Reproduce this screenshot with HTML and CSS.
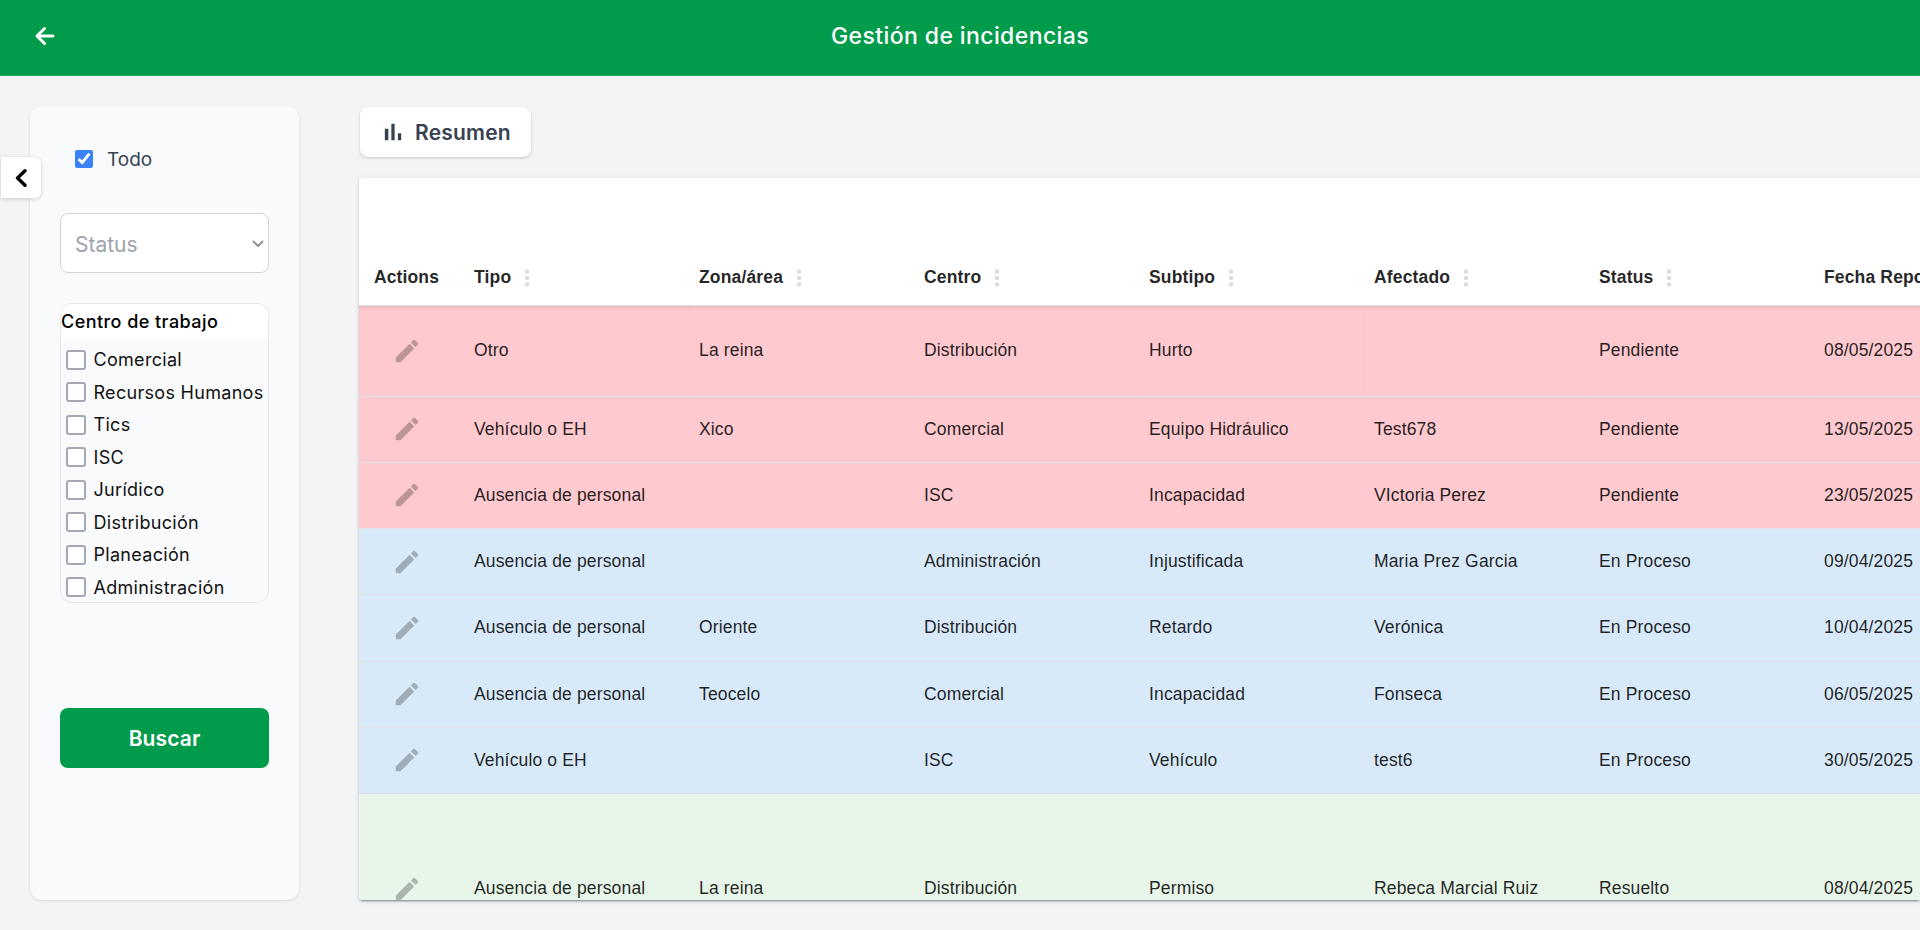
FILE: index.html
```html
<!DOCTYPE html>
<html lang="es">
<head>
    <meta charset="UTF-8">
    <meta name="viewport" content="width=device-width, initial-scale=1.0">
    <title>Gestión de incidencias</title>
    <link rel="stylesheet" href="styles.css">
</head>
<body>
    <header class="topbar">
        <button class="back-btn" aria-label="Volver">
            <svg width="20" height="20" viewBox="0 0 20 20" fill="none" stroke="#fff" stroke-width="2.9" stroke-linecap="round" stroke-linejoin="round"><path d="M18 10H2.5M9.5 2.5 2 10l7.5 7.5"/></svg>
        </button>
        <h1>Gestión de incidencias</h1>
    </header>

    <main class="layout">
        <button class="collapse-btn" aria-label="Ocultar filtros">
            <svg width="12" height="18" viewBox="0 0 12 18" fill="none" stroke="#000" stroke-width="3.4" stroke-linecap="round" stroke-linejoin="round"><path d="M10 1.8 2.5 9l7.5 7.2"/></svg>
        </button>

        <aside class="sidebar">
            <label class="check-all"><input type="checkbox" checked> Todo</label>

            <div class="select-wrap">
                <select class="status-select">
                    <option>Status</option>
                </select>
                <svg class="select-arrow" width="12" height="8" viewBox="0 0 12 8" fill="none" stroke="#8b8f98" stroke-width="1.8" stroke-linecap="round" stroke-linejoin="round"><path d="M1.5 1.5 6 6l4.5-4.5"/></svg>
            </div>

            <div class="work-list">
                <div class="work-title">Centro de trabajo</div>
                <label class="work-item"><input type="checkbox"> Comercial</label>
                <label class="work-item"><input type="checkbox"> Recursos Humanos</label>
                <label class="work-item"><input type="checkbox"> Tics</label>
                <label class="work-item"><input type="checkbox"> ISC</label>
                <label class="work-item"><input type="checkbox"> Jurídico</label>
                <label class="work-item"><input type="checkbox"> Distribución</label>
                <label class="work-item"><input type="checkbox"> Planeación</label>
                <label class="work-item"><input type="checkbox"> Administración</label>
            </div>

            <button class="search-btn">Buscar</button>
        </aside>

        <section class="content">
            <button class="summary-btn">
                <svg width="28" height="28" viewBox="0 0 24 24" fill="#374151"><path d="M5 9.2h3V19H5zM10.6 5h2.8v14h-2.8zm5.6 8H19v6h-2.8z"/></svg>
                Resumen
            </button>

            <div class="table-card">
                <table class="grid">
                    <colgroup>
                        <col class="col-actions">
                        <col class="col-data"><col class="col-data"><col class="col-data"><col class="col-data">
                        <col class="col-data"><col class="col-data"><col class="col-data">
                    </colgroup>
                    <thead>
                        <tr>
                            <th class="actions-cell"><span class="th-inner th-center">Actions</span></th>
                            <th><span class="th-inner">Tipo <svg class="dots" width="6" height="18" viewBox="0 0 6 18"><circle cx="3" cy="2.5" r="2.3"/><circle cx="3" cy="9" r="2.3"/><circle cx="3" cy="15.5" r="2.3"/></svg></span></th>
                            <th><span class="th-inner">Zona/área <svg class="dots" width="6" height="18" viewBox="0 0 6 18"><circle cx="3" cy="2.5" r="2.3"/><circle cx="3" cy="9" r="2.3"/><circle cx="3" cy="15.5" r="2.3"/></svg></span></th>
                            <th><span class="th-inner">Centro <svg class="dots" width="6" height="18" viewBox="0 0 6 18"><circle cx="3" cy="2.5" r="2.3"/><circle cx="3" cy="9" r="2.3"/><circle cx="3" cy="15.5" r="2.3"/></svg></span></th>
                            <th><span class="th-inner">Subtipo <svg class="dots" width="6" height="18" viewBox="0 0 6 18"><circle cx="3" cy="2.5" r="2.3"/><circle cx="3" cy="9" r="2.3"/><circle cx="3" cy="15.5" r="2.3"/></svg></span></th>
                            <th><span class="th-inner">Afectado <svg class="dots" width="6" height="18" viewBox="0 0 6 18"><circle cx="3" cy="2.5" r="2.3"/><circle cx="3" cy="9" r="2.3"/><circle cx="3" cy="15.5" r="2.3"/></svg></span></th>
                            <th><span class="th-inner">Status <svg class="dots" width="6" height="18" viewBox="0 0 6 18"><circle cx="3" cy="2.5" r="2.3"/><circle cx="3" cy="9" r="2.3"/><circle cx="3" cy="15.5" r="2.3"/></svg></span></th>
                            <th><span class="th-inner">Fecha Reporte</span></th>
                        </tr>
                    </thead>
                    <tbody id="rows"></tbody>
                </table>
            </div>
        </section>
    </main>

    <script>
        var data = [
            ["pink tall", "Otro", "La reina", "Distribución", "Hurto", "", "Pendiente", "08/05/2025"],
            ["pink", "Vehículo o EH", "Xico", "Comercial", "Equipo Hidráulico", "Test678", "Pendiente", "13/05/2025"],
            ["pink", "Ausencia de personal", "", "ISC", "Incapacidad", "VIctoria Perez", "Pendiente", "23/05/2025"],
            ["blue", "Ausencia de personal", "", "Administración", "Injustificada", "Maria Prez Garcia", "En Proceso", "09/04/2025"],
            ["blue", "Ausencia de personal", "Oriente", "Distribución", "Retardo", "Verónica", "En Proceso", "10/04/2025"],
            ["blue", "Ausencia de personal", "Teocelo", "Comercial", "Incapacidad", "Fonseca", "En Proceso", "06/05/2025"],
            ["blue", "Vehículo o EH", "", "ISC", "Vehículo", "test6", "En Proceso", "30/05/2025"],
            ["green huge", "Ausencia de personal", "La reina", "Distribución", "Permiso", "Rebeca Marcial Ruiz", "Resuelto", "08/04/2025"]
        ];
        var pencil = '<svg class="edit-icon" width="30" height="30" viewBox="0 0 24 24"><path d="M3 17.25V21h3.75L17.81 9.94l-3.75-3.75L3 17.25zM20.71 7.04c.39-.39.39-1.02 0-1.41l-2.34-2.34a.9959.9959 0 0 0-1.41 0l-1.83 1.83 3.75 3.75 1.83-1.83z"/></svg>';
        var html = "";
        data.forEach(function (row) {
            html += '<tr class="' + row[0] + '"><td class="actions-cell">' + pencil + '</td>';
            for (var i = 1; i < row.length; i++) {
                html += "<td>" + row[i] + "</td>";
            }
            html += "</tr>";
        });
        document.getElementById("rows").innerHTML = html;
    </script>
</body>
</html>
```

FILE: styles.css
```css
* { box-sizing: border-box; }
html, body { height: 100%; }
body { margin: 0; background: #f3f4f6; font-family: "Inter", "Open Sans", sans-serif; color: #374151; overflow: hidden; display: flex; flex-direction: column; }
button { font-family: inherit; cursor: pointer; border: none; }

/* top bar */
.topbar { flex: none; height: 76px; background: #009b4b; border-bottom: 1px solid #1ea863; display: flex; align-items: center; justify-content: center; position: relative; }
.topbar h1 { margin: 0 0 4px; font-size: 23px; font-weight: 500; letter-spacing: 0.4px; color: #fff; }
.back-btn { position: absolute; left: 35px; top: 26px; padding: 0; background: none; display: flex; }

/* page body */
.layout { flex: 1; min-height: 0; display: flex; gap: 60px; padding: 30px 0 30px 30px; position: relative; }
.collapse-btn { position: absolute; left: 1px; top: 81px; width: 40px; height: 41px; padding: 0 1px 0 0; background: #fff; border-radius: 0 6px 6px 0; box-shadow: 0 1px 4px rgba(0,0,0,.18); display: flex; align-items: center; justify-content: center; z-index: 2; }

/* filters */
.sidebar { flex: none; width: 269px; background: #f9fafb; border-radius: 12px; padding: 44px 30px 0; box-shadow: 0 1px 3px rgba(0,0,0,.12); display: flex; flex-direction: column; }
.check-all { display: flex; align-items: center; gap: 14px; margin-left: 15px; height: 18px; font-size: 19px; }
.check-all input { width: 18px; height: 18px; margin: 0; accent-color: #3b82f6; }
.select-wrap { margin-top: 45px; position: relative; display: flex; }
.status-select { appearance: none; flex: 1; height: 60px; padding: 2px 14px 0; background: #fff; border: 1px solid #d1d5db; border-radius: 8px; font-family: inherit; font-size: 21px; color: #9ca3af; }
.select-arrow { position: absolute; right: 5px; top: 27px; }
.work-list { margin-top: 30px; height: 300px; overflow: hidden; background: #f9fafb; border: 1px solid #e5e7eb; border-radius: 12px; }
.work-title { height: 36px; margin-bottom: 3.5px; padding-top: 1px; background: #fff; color: #000; font-size: 18px; font-weight: 500; letter-spacing: 0.45px; line-height: 34px; }
.work-item { display: flex; align-items: center; gap: 7.5px; height: 32.5px; padding-left: 5px; color: #111; font-size: 18px; letter-spacing: 0.3px; white-space: nowrap; }
.work-item input { appearance: none; flex: none; width: 20px; height: 20px; margin: 0; background: #fff; border: 2px solid #a5a7b5; border-radius: 3px; }
.search-btn { margin-top: 105px; height: 60px; padding-top: 2px; background: #009b4b; border-radius: 8px; color: #fff; font-size: 21px; font-weight: 600; letter-spacing: 0.1px; }

/* table area */
.content { flex: 1; min-width: 0; display: flex; flex-direction: column; }
.summary-btn { flex: none; align-self: flex-start; margin: 1px 0 21px 1px; width: 171px; height: 50px; padding: 0 0 0 19px; background: #fff; color: #374151; border-radius: 8px; box-shadow: 0 1px 3px rgba(0,0,0,.2); display: flex; align-items: center; gap: 8px; font-size: 21px; font-weight: 600; letter-spacing: 0.2px; }
.table-card { flex: 1; min-height: 0; overflow: hidden; background: #fff; border-radius: 4px 0 0 4px; box-shadow: 0 3px 1px -2px rgba(0,0,0,.2), 0 2px 2px rgba(0,0,0,.14), 0 1px 5px rgba(0,0,0,.12); }
.grid { table-layout: fixed; width: 1680px; border-collapse: collapse; font-family: "Liberation Sans", Arial, sans-serif; font-size: 17.5px; letter-spacing: 0.15px; color: rgba(0,0,0,.87); }
.col-actions { width: 105px; }
.col-data { width: 225px; }
.grid th { height: 127px; padding: 0 10px 18px; vertical-align: bottom; text-align: left; font-weight: 700; border-bottom: 1px solid #e0e0e0; white-space: nowrap; }
.th-inner { display: flex; align-items: center; gap: 13px; height: 18px; }
.th-center { justify-content: center; }
.dots { fill: #dcdcdc; flex: none; }
.grid td { height: 66.25px; padding: 0 10px; border-bottom: 1px solid #e2e2e2; white-space: nowrap; }
.grid .actions-cell { padding: 0 10px 0 0; text-align: center; }
.grid th.actions-cell { padding-bottom: 18px; }
.edit-icon { display: block; margin: 0 auto; fill: rgba(0,0,0,.26); }

tr.pink td { background: #fec9cf; }
tr.blue td { background: #d8eaf9; }
tr.green td { background: #e8f6e9; }
tr.tall td { height: 91px; box-shadow: inset 0 4px 4px -3px rgba(0,0,0,.12); }
tr.huge td { height: 190px; }
```
